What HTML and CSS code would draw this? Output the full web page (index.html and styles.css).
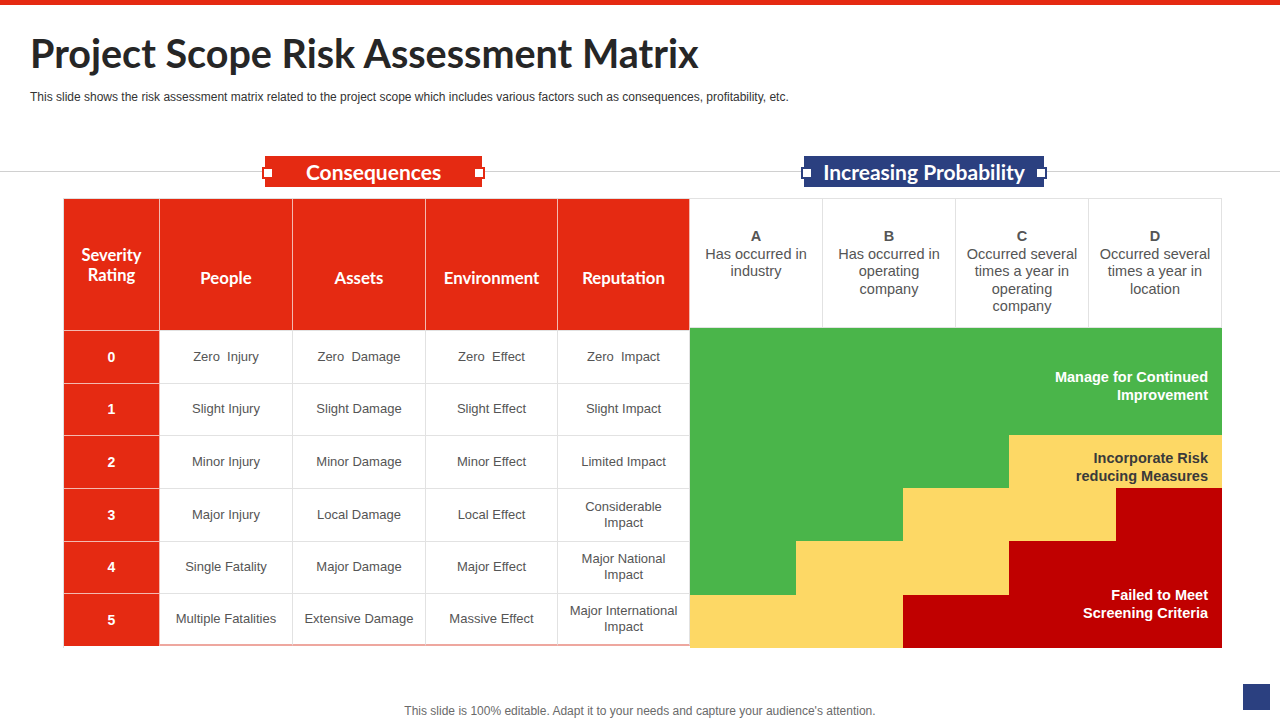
FILE: index.html
```html
<!DOCTYPE html>
<html lang="en">
<head>
<meta charset="utf-8">
<title>Project Scope Risk Assessment Matrix</title>
<link rel="stylesheet" href="styles.css">
</head>
<body>
<div class="slide">
  <div class="topbar"></div>
  <header class="head">
    <h1 class="title">Project Scope Risk Assessment Matrix</h1>
    <p class="subtitle">This slide shows the risk assessment matrix related to the project scope which includes various factors such as consequences, profitability, etc.</p>
  </header>

  <div class="section-bar">
    <div class="tag tag-red">Consequences</div>
    <div class="tag tag-blue">Increasing Probability</div>
  </div>

  <div class="matrix">
    <div class="conseq">
      <div class="hcell sev-head">Severity<br>Rating</div>
      <div class="hcell">People</div>
      <div class="hcell">Assets</div>
      <div class="hcell">Environment</div>
      <div class="hcell">Reputation</div>

      <div class="sev">0</div>
      <div class="cell">Zero &nbsp;Injury</div>
      <div class="cell">Zero &nbsp;Damage</div>
      <div class="cell">Zero &nbsp;Effect</div>
      <div class="cell">Zero &nbsp;Impact</div>

      <div class="sev">1</div>
      <div class="cell">Slight Injury</div>
      <div class="cell">Slight Damage</div>
      <div class="cell">Slight Effect</div>
      <div class="cell">Slight Impact</div>

      <div class="sev">2</div>
      <div class="cell">Minor Injury</div>
      <div class="cell">Minor Damage</div>
      <div class="cell">Minor Effect</div>
      <div class="cell">Limited Impact</div>

      <div class="sev">3</div>
      <div class="cell">Major Injury</div>
      <div class="cell">Local Damage</div>
      <div class="cell">Local Effect</div>
      <div class="cell">Considerable<br>Impact</div>

      <div class="sev">4</div>
      <div class="cell">Single Fatality</div>
      <div class="cell">Major Damage</div>
      <div class="cell">Major Effect</div>
      <div class="cell">Major National<br>Impact</div>

      <div class="sev">5</div>
      <div class="cell last">Multiple Fatalities</div>
      <div class="cell last">Extensive Damage</div>
      <div class="cell last">Massive Effect</div>
      <div class="cell last">Major International<br>Impact</div>
    </div>

    <div class="prob">
      <div class="prob-head">
        <div class="pcell"><span class="letter">A</span>Has occurred in industry</div>
        <div class="pcell"><span class="letter">B</span>Has occurred in operating company</div>
        <div class="pcell"><span class="letter">C</span>Occurred several times a year in operating company</div>
        <div class="pcell"><span class="letter">D</span>Occurred several times a year in location</div>
      </div>
      <div class="risk">
        <div class="risk-grid">
          <div class="g"></div><div class="g"></div><div class="g"></div><div class="g"></div><div class="g"></div>
          <div class="g"></div><div class="g"></div><div class="g"></div><div class="g"></div><div class="g"></div>
          <div class="g"></div><div class="g"></div><div class="g"></div><div class="y"></div><div class="y"></div>
          <div class="g"></div><div class="g"></div><div class="y"></div><div class="y"></div><div class="r"></div>
          <div class="g"></div><div class="y"></div><div class="y"></div><div class="r"></div><div class="r"></div>
          <div class="y"></div><div class="y"></div><div class="r"></div><div class="r"></div><div class="r"></div>
        </div>
        <div class="risk-labels">
          <div class="label label-green">Manage for Continued<br>Improvement</div>
          <div class="label label-yellow">Incorporate Risk<br>reducing Measures</div>
          <div class="label label-red">Failed to Meet<br>Screening Criteria</div>
        </div>
      </div>
    </div>
  </div>

  <footer class="foot">
    <span></span>
    <p class="foot-text">This slide is 100% editable. Adapt it to your needs and capture your audience's attention.</p>
    <span class="foot-square"></span>
  </footer>
</div>
</body>
</html>
```

FILE: styles.css
```css
* { box-sizing: border-box; }

html, body {
  margin: 0;
  padding: 0;
  background: #ffffff;
}

.slide {
  width: 1280px;
  height: 720px;
  overflow: hidden;
  position: relative;
  background: #ffffff;
  font-family: "Liberation Sans", Arial, sans-serif;
}

.topbar {
  height: 5px;
  background: #e52a12;
}

.head {
  padding: 24px 0 0 30px;
}

.title {
  margin: 0;
  font-family: "Lato", "Liberation Sans", sans-serif;
  font-weight: 700;
  font-size: 39.5px;
  line-height: 48px;
  color: #262626;
}

.subtitle {
  margin: 13px 0 0 0;
  font-size: 12px;
  line-height: 14px;
  color: #333333;
}

.section-bar {
  margin-top: 52px;
  height: 31px;
  display: flex;
  padding-left: 265px;
  gap: 322px;
  background: linear-gradient(#d0d0d0, #d0d0d0) 0 15px / 100% 1px no-repeat;
}

.tag {
  position: relative;
  height: 31px;
  display: flex;
  align-items: center;
  justify-content: center;
  color: #ffffff;
  font-family: "Lato", "Liberation Sans", sans-serif;
  font-weight: 700;
  font-size: 21px;
}

.tag::before,
.tag::after {
  content: "";
  position: absolute;
  top: 11px;
  width: 8px;
  height: 8px;
  background: #ffffff;
  border: 2px solid;
}
.tag::before { left: -3px; }
.tag::after { right: -3px; }

.tag-red {
  width: 217px;
  background: #e52a12;
}
.tag-red::before, .tag-red::after { border-color: #e52a12; }

.tag-blue {
  width: 240px;
  background: #2b4080;
}
.tag-blue::before, .tag-blue::after { border-color: #2b4080; }

.matrix {
  margin: 11px 0 0 63px;
  display: flex;
}

.conseq {
  display: grid;
  grid-template-columns: 96px 133px 133px 132px 132px;
  grid-template-rows: 131px repeat(6, 52.67px);
  border-left: 1px solid #e0e0e0;
  border-top: 1px solid #e0e0e0;
}

.hcell {
  background: #e52a12;
  color: #ffffff;
  font-family: "Lato", "Liberation Sans", sans-serif;
  font-weight: 700;
  font-size: 16.8px;
  line-height: 20px;
  display: flex;
  align-items: center;
  justify-content: center;
  text-align: center;
  padding-top: 27px;
  border-right: 1px solid #f3b9b0;
}

.hcell.sev-head {
  padding-top: 0;
  font-size: 16.5px;
}

.sev {
  background: #e52a12;
  color: #ffffff;
  font-weight: 700;
  font-size: 14px;
  display: flex;
  align-items: center;
  justify-content: center;
  border-top: 1px solid #f3b9b0;
  border-right: 1px solid #f3b9b0;
}

.cell {
  display: flex;
  align-items: center;
  justify-content: center;
  text-align: center;
  font-size: 13px;
  line-height: 16px;
  color: #555555;
  border-top: 1px solid #e2e2e2;
  border-right: 1px solid #e2e2e2;
}

.cell.last {
  border-bottom: 2px solid #eea79f;
}

.prob {
  display: flex;
  flex-direction: column;
  width: 532px;
}

.prob-head {
  display: grid;
  grid-template-columns: repeat(4, 133px);
  height: 130px;
}

.pcell {
  border: 1px solid #e2e2e2;
  border-left: none;
  padding: 29px 9px 0 9px;
  text-align: center;
  font-size: 14.5px;
  line-height: 17.6px;
  color: #555555;
}

.letter {
  display: block;
  font-weight: 700;
  color: #555555;
}

.risk {
  position: relative;
  height: 320px;
}

.risk-grid,
.risk-labels {
  display: grid;
  grid-template-columns: repeat(5, 1fr);
  grid-template-rows: repeat(6, 53.33px);
  height: 320px;
}

.risk-labels {
  position: absolute;
  inset: 0;
}

.g { background: #4ab54a; }
.y { background: #fdd865; }
.r { background: #c00000; }

.label {
  grid-column: 1 / 6;
  align-self: center;
  text-align: right;
  padding-right: 14px;
  font-weight: 700;
  font-size: 14.5px;
  line-height: 18px;
  color: #ffffff;
}

.label-green {
  grid-row: 1 / 3;
  padding-top: 10px;
}

.label-yellow {
  grid-row: 3 / 4;
  color: #3a3a3a;
  padding-top: 12px;
}

.label-red {
  grid-row: 5 / 7;
  padding-top: 18px;
}

.foot {
  margin-top: 36px;
  display: grid;
  grid-template-columns: 1fr auto 1fr;
  align-items: end;
  height: 26px;
}

.foot-text {
  margin: 0;
  font-size: 12px;
  line-height: 14px;
  color: #6a6a6a;
  transform: translateY(8px);
}

.foot-square {
  justify-self: end;
  align-self: start;
  width: 27px;
  height: 26px;
  margin-right: 10px;
  background: #2b4080;
}
```
